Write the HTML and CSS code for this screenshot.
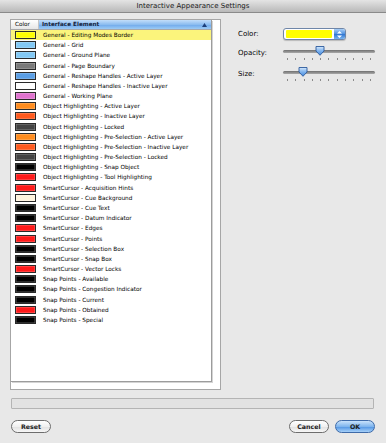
FILE: index.html
```html
<!DOCTYPE html>
<html>
<head>
<meta charset="utf-8">
<link rel="stylesheet" href="styles.css">
</head>
<body>
<div class="window">
  <div class="titlebar">Interactive Appearance Settings</div>
  <div class="main">
    <div class="listbox">
      <div class="table">
        <div class="thead">
          <div class="th-color">Color</div>
          <div class="th-elem">Interface Element
            <svg class="sort" width="5" height="4" viewBox="0 0 5 4"><path d="M2.5 0 L5 4 L0 4 Z" fill="#1d3f7a"/></svg>
          </div>
        </div>
        <div class="rows">
          <div class="row sel"><span class="sw" style="background:#ffff00"></span><span class="lbl">General - Editing Modes Border</span></div>
          <div class="row"><span class="sw" style="background:#82c8f4"></span><span class="lbl">General - Grid</span></div>
          <div class="row"><span class="sw" style="background:#82c8f4"></span><span class="lbl">General - Ground Plane</span></div>
          <div class="row"><span class="sw" style="background:#7a7a7a"></span><span class="lbl">General - Page Boundary</span></div>
          <div class="row"><span class="sw" style="background:#5b9fe6"></span><span class="lbl">General - Reshape Handles - Active Layer</span></div>
          <div class="row"><span class="sw" style="background:#ffffff"></span><span class="lbl">General - Reshape Handles - Inactive Layer</span></div>
          <div class="row"><span class="sw" style="background:#e073cf"></span><span class="lbl">General - Working Plane</span></div>
          <div class="row"><span class="sw" style="background:#ff8c1e"></span><span class="lbl">Object Highlighting - Active Layer</span></div>
          <div class="row"><span class="sw" style="background:#ff5a1e"></span><span class="lbl">Object Highlighting - Inactive Layer</span></div>
          <div class="row"><span class="sw" style="background:#444444"></span><span class="lbl">Object Highlighting - Locked</span></div>
          <div class="row"><span class="sw" style="background:#ff8c1e"></span><span class="lbl">Object Highlighting - Pre-Selection - Active Layer</span></div>
          <div class="row"><span class="sw" style="background:#ff5a1e"></span><span class="lbl">Object Highlighting - Pre-Selection - Inactive Layer</span></div>
          <div class="row"><span class="sw" style="background:#444444"></span><span class="lbl">Object Highlighting - Pre-Selection - Locked</span></div>
          <div class="row"><span class="sw" style="background:#000000"></span><span class="lbl">Object Highlighting - Snap Object</span></div>
          <div class="row"><span class="sw" style="background:#ff1a1a"></span><span class="lbl">Object Highlighting - Tool Highlighting</span></div>
          <div class="row"><span class="sw" style="background:#ff1a1a"></span><span class="lbl">SmartCursor - Acquisition Hints</span></div>
          <div class="row"><span class="sw" style="background:#fff4de"></span><span class="lbl">SmartCursor - Cue Background</span></div>
          <div class="row"><span class="sw" style="background:#000000"></span><span class="lbl">SmartCursor - Cue Text</span></div>
          <div class="row"><span class="sw" style="background:#000000"></span><span class="lbl">SmartCursor - Datum Indicator</span></div>
          <div class="row"><span class="sw" style="background:#ff1a1a"></span><span class="lbl">SmartCursor - Edges</span></div>
          <div class="row"><span class="sw" style="background:#ff1a1a"></span><span class="lbl">SmartCursor - Points</span></div>
          <div class="row"><span class="sw" style="background:#000000"></span><span class="lbl">SmartCursor - Selection Box</span></div>
          <div class="row"><span class="sw" style="background:#000000"></span><span class="lbl">SmartCursor - Snap Box</span></div>
          <div class="row"><span class="sw" style="background:#ff1a1a"></span><span class="lbl">SmartCursor - Vector Locks</span></div>
          <div class="row"><span class="sw" style="background:#000000"></span><span class="lbl">Snap Points - Available</span></div>
          <div class="row"><span class="sw" style="background:#000000"></span><span class="lbl">Snap Points - Congestion Indicator</span></div>
          <div class="row"><span class="sw" style="background:#000000"></span><span class="lbl">Snap Points - Current</span></div>
          <div class="row"><span class="sw" style="background:#ff1a1a"></span><span class="lbl">Snap Points - Obtained</span></div>
          <div class="row"><span class="sw" style="background:#000000"></span><span class="lbl">Snap Points - Special</span></div>
        </div>
      </div>
    </div>
    <div class="panel">
      <div class="prow color-row">
        <span class="plabel">Color:</span>
        <div class="popup">
          <span class="popup-fill"></span>
          <span class="stepper">
            <svg width="5" height="7" viewBox="0 0 5 7"><path d="M2.5 0 L5 2.6 L0 2.6 Z M2.5 7 L5 4.4 L0 4.4 Z" fill="#fff"/></svg>
          </span>
        </div>
      </div>
      <div class="prow slider-row">
        <span class="plabel">Opacity:</span>
        <div class="slider">
          <div class="track-wrap">
            <div class="track"></div>
            <svg class="thumb" style="left:32px" width="10" height="10" viewBox="0 0 10 10"><defs><linearGradient id="tg1" x1="0" y1="0" x2="0" y2="1"><stop offset="0" stop-color="#d6e9fc"/><stop offset="0.5" stop-color="#7fb3ee"/><stop offset="1" stop-color="#3f86dc"/></linearGradient></defs><path d="M1 0.5 H9 V5 L5 9.3 L1 5 Z" fill="url(#tg1)" stroke="#2c5a9c" stroke-width="0.9"/></svg>
          </div>
          <div class="ticks"><i></i><i></i><i></i><i></i><i></i><i></i><i></i><i></i><i></i><i></i><i></i></div>
        </div>
      </div>
      <div class="prow slider-row">
        <span class="plabel">Size:</span>
        <div class="slider">
          <div class="track-wrap">
            <div class="track"></div>
            <svg class="thumb" style="left:15px" width="10" height="10" viewBox="0 0 10 10"><defs><linearGradient id="tg2" x1="0" y1="0" x2="0" y2="1"><stop offset="0" stop-color="#d6e9fc"/><stop offset="0.5" stop-color="#7fb3ee"/><stop offset="1" stop-color="#3f86dc"/></linearGradient></defs><path d="M1 0.5 H9 V5 L5 9.3 L1 5 Z" fill="url(#tg2)" stroke="#2c5a9c" stroke-width="0.9"/></svg>
          </div>
          <div class="ticks"><i></i><i></i><i></i><i></i><i></i><i></i><i></i><i></i><i></i><i></i><i></i></div>
        </div>
      </div>
    </div>
  </div>
  <div class="status"></div>
  <div class="buttons">
    <button class="btn">Reset</button>
    <div class="right-btns">
      <button class="btn">Cancel</button>
      <button class="btn ok">OK</button>
    </div>
  </div>
</div>
</body>
</html>
```
FILE: styles.css
```css
html, body {
  margin: 0;
  padding: 0;
}
body {
  width: 386px;
  height: 443px;
  overflow: hidden;
  background: #e8e8e8;
  font-family: "DejaVu Sans", "Liberation Sans", sans-serif;
  color: #000;
}
.window {
  display: flex;
  flex-direction: column;
  height: 443px;
}
.titlebar {
  height: 13px;
  line-height: 13px;
  text-align: center;
  font-size: 7px;
  color: #1a1a1a;
  background: linear-gradient(#e4e4e4, #b9b9b9);
  border-bottom: 1px solid #8a8a8a;
  box-sizing: border-box;
}
.main {
  display: flex;
  padding: 6px 0 0 10px;
}
.listbox {
  width: 211px;
  height: 371px;
  box-sizing: border-box;
  border: 1px solid #a6a6a6;
  background: #fff;
}
.table {
  width: 201px;
  height: 362px;
  box-sizing: border-box;
  border-right: 1px solid #9c9c9c;
  border-bottom: 1px solid #9c9c9c;
  box-shadow: 1px 1px 0 #d4d4d4;
}
.thead {
  display: flex;
  height: 10px;
  border-bottom: 1px solid #a8a8a8;
  box-sizing: border-box;
  font-size: 5.7px;
  line-height: 9px;
}
.th-color {
  width: 28px;
  padding-left: 4px;
  box-sizing: border-box;
  background: linear-gradient(#ffffff, #e6e6e6);
  border-right: 1px solid #c4c4c4;
}
.th-elem {
  flex: 1;
  display: flex;
  align-items: center;
  justify-content: space-between;
  padding: 0 4px 0 3px;
  font-weight: bold;
  color: #15233d;
  background: linear-gradient(#c3defa, #8cbdf0 50%, #6ea8ea 51%, #9ccbf6);
}
.sort {
  display: block;
}
.row {
  height: 10.18px;
  display: flex;
  align-items: center;
  padding-left: 4px;
  font-size: 5.75px;
}
.row.sel {
  background: #fbf47c;
}
.sw {
  width: 21px;
  height: 8px;
  box-sizing: border-box;
  border: 1px solid #2a2a2a;
  box-shadow: inset 0 0 0 0.5px rgba(255,255,255,0.35);
  flex: none;
}
.lbl {
  margin-left: 7px;
  white-space: nowrap;
}
.panel {
  margin-left: 17px;
  width: 137px;
  display: flex;
  flex-direction: column;
}
.prow {
  display: flex;
}
.plabel {
  width: 45px;
  font-size: 7px;
  flex: none;
}
.color-row {
  margin-top: 9px;
  height: 12px;
  align-items: center;
}
.popup {
  width: 63px;
  height: 12px;
  box-sizing: border-box;
  border: 1px solid #6f86a8;
  border-radius: 3px;
  background: #fff;
  display: flex;
  padding: 1px 0 1px 2px;
  box-shadow: 0 1px 1px rgba(0,0,0,0.2);
}
.popup-fill {
  flex: 1;
  background: #ffff00;
  border-radius: 1px;
}
.stepper {
  width: 11px;
  margin-top: -1px;
  margin-bottom: -1px;
  margin-left: 2px;
  border-radius: 0 2px 2px 0;
  background: linear-gradient(#a9cff6, #4d8fe0 50%, #2f74d0 51%, #79b4f0);
  display: flex;
  align-items: center;
  justify-content: center;
}
.slider-row {
  margin-top: 6px;
}
.slider-row .plabel {
  padding-top: 3px;
  line-height: 8px;
}
.slider {
  width: 92px;
  display: flex;
  flex-direction: column;
}
.track-wrap {
  position: relative;
  height: 10px;
  display: flex;
  align-items: center;
}
.track {
  flex: 1;
  height: 3px;
  border-radius: 2px;
  background: linear-gradient(#6f6f6f, #a9a9a9);
}
.thumb {
  position: absolute;
  top: 0;
}
.ticks {
  display: flex;
  justify-content: space-between;
  padding: 0 4px;
  margin-top: 2px;
  height: 3px;
}
.ticks i {
  width: 1px;
  height: 2px;
  background: #8a8a8a;
}
.status {
  margin: 8px 12px 0 11px;
  height: 11px;
  box-sizing: border-box;
  border: 1px solid #b4b4b4;
  border-radius: 1px;
  background: #e2e2e2;
}
.buttons {
  display: flex;
  justify-content: space-between;
  padding: 11px 11px 0 11px;
}
.right-btns {
  display: flex;
  gap: 6px;
}
.btn {
  width: 40px;
  height: 13px;
  margin: 0;
  padding: 0;
  box-sizing: border-box;
  border: 1px solid #6d6d6d;
  border-radius: 7px;
  background: linear-gradient(#ffffff, #f0f0f0 50%, #e0e0e0 51%, #f7f7f7);
  font-family: "DejaVu Sans", "Liberation Sans", sans-serif;
  font-size: 6.3px;
  font-weight: bold;
  color: #222;
  line-height: 11px;
}
.btn.ok {
  border-color: #3e6aa8;
  background: linear-gradient(#c9e2fb, #7fb5ee 50%, #4f93e3 51%, #a6d0f8);
}
```
